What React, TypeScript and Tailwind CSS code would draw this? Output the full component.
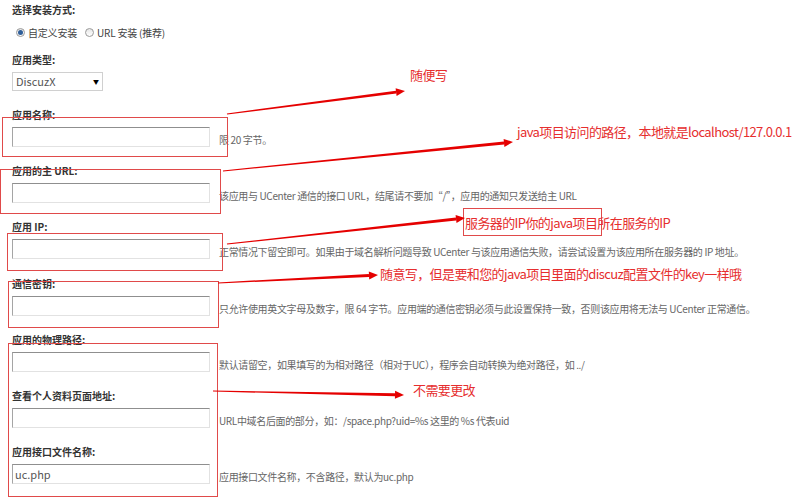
import React from 'react';

const font = { fontFamily: '"Noto Sans CJK SC", "Noto Sans", sans-serif' };

type Field = { label: string; hint: string; value?: string };

const fields: Field[] = [
  { label: '应用名称:', hint: '限 20 字节。' },
  { label: '应用的主 URL:', hint: '该应用与 UCenter 通信的接口 URL，结尾请不要加“/”，应用的通知只发送给主 URL' },
  { label: '应用 IP:', hint: '正常情况下留空即可。如果由于域名解析问题导致 UCenter 与该应用通信失败，请尝试设置为该应用所在服务器的 IP 地址。' },
  { label: '通信密钥:', hint: '只允许使用英文字母及数字，限 64 字节。应用端的通信密钥必须与此设置保持一致，否则该应用将无法与 UCenter 正常通信。' },
  { label: '应用的物理路径:', hint: '默认请留空，如果填写的为相对路径（相对于UC），程序会自动转换为绝对路径，如 ../' },
  { label: '查看个人资料页面地址:', hint: 'URL中域名后面的部分，如：/space.php?uid=%s 这里的 %s 代表uid' },
  { label: '应用接口文件名称:', hint: '应用接口文件名称，不含路径，默认为uc.php', value: 'uc.php' },
];

// red annotation arrows: [x1, y1, tipX, tipY]
const arrows: [number, number, number, number][] = [
  [227, 114, 405, 91],
  [223, 171, 513, 142],
  [227, 244, 465, 218],
  [218, 283, 378, 275],
  [213, 391, 404, 395],
];

// red highlight boxes drawn over the form: [left, top, width, height]
const boxes: [number, number, number, number][] = [
  [2, 117, 226, 40],
  [0, 169, 221, 45],
  [7, 233, 216, 38],
  [8, 281, 211, 47],
  [8, 343, 210, 154],
  [463, 208, 139, 28],
];

// annotation notes: [left, top, text]
const notes: [number, number, string][] = [
  [410, 66, '随便写'],
  [517, 123, 'java项目访问的路径，本地就是localhost/127.0.0.1'],
  [465, 214, '服务器的IP你的java项目所在服务的IP'],
  [380, 265, '随意写，但是要和您的java项目里面的discuz配置文件的key一样哦'],
  [413, 381, '不需要更改'],
];

function arrowPoints(x1: number, y1: number, x2: number, y2: number) {
  const len = Math.hypot(x2 - x1, y2 - y1);
  const ux = (x2 - x1) / len;
  const uy = (y2 - y1) / len;
  const nx = -uy;
  const ny = ux;
  const bx = x2 - ux * 9;
  const by = y2 - uy * 9;
  const p = (x: number, y: number) => `${x.toFixed(1)},${y.toFixed(1)}`;
  const shaft = [
    p(x1 + nx * 0.5, y1 + ny * 0.5),
    p(bx + nx * 1.5, by + ny * 1.5),
    p(bx - nx * 1.5, by - ny * 1.5),
    p(x1 - nx * 0.5, y1 - ny * 0.5),
  ].join(' ');
  const head = [p(x2, y2), p(bx + nx * 4, by + ny * 4), p(bx - nx * 4, by - ny * 4)].join(' ');
  return { shaft, head };
}

function Radio({ checked }: { checked?: boolean }) {
  return (
    <span className="flex h-[9px] w-[9px] items-center justify-center rounded-full border border-[#9a9a9a] bg-gradient-to-b from-[#e6e6e6] to-white">
      {checked && <span className="h-[5px] w-[5px] rounded-full bg-[#2f5f9a]" />}
    </span>
  );
}

function TextInput({ value }: { value?: string }) {
  return (
    <div className="flex h-[20px] w-[198px] items-center border border-t-[#8f8f8f] border-l-[#a5a5a5] border-r-[#e2e2e2] border-b-[#e2e2e2] bg-white pl-[2px] text-[11px] text-[#555]">
      {value}
    </div>
  );
}

export default function App() {
  return (
    <div className="relative h-[500px] w-[800px] overflow-hidden bg-white" style={font}>
      <div className="pl-[12px] pt-[4px]">
        <div className="h-[12px] text-[10px] font-bold leading-[12px] text-[#333]">选择安装方式:</div>
        <div className="mt-[9px] flex h-[14px] items-center gap-[3px] pl-[4px] text-[10px] tracking-[-0.2px] text-[#444]">
          <Radio checked />
          <span className="mr-[5px]">自定义安装</span>
          <Radio />
          <span>URL 安装 (推荐)</span>
        </div>

        <div className="mt-[15px] h-[12px] text-[10px] font-bold leading-[12px] text-[#333]">应用类型:</div>
        <div className="mt-[6px] flex h-[19px] w-[91px] items-center justify-between border border-[#d0d0d0] bg-white pl-[3px] pr-[3px] text-[11px] text-[#555]">
          <span>DiscuzX</span>
          <span className="text-[6px] text-black">▼</span>
        </div>

        {fields.map((f, i) => (
          <div key={f.label} className={i === 0 ? 'mt-[18px]' : 'mt-[18.2px]'}>
            <div className="h-[12px] text-[10px] font-bold leading-[12px] text-[#333]">{f.label}</div>
            <div className="mt-[6px] flex items-end">
              <TextInput value={f.value} />
              <span className="ml-[9px] whitespace-nowrap pb-[1px] text-[10px] leading-[12px] tracking-[-0.35px] text-[#666]">
                {f.hint}
              </span>
            </div>
          </div>
        ))}
      </div>

      {boxes.map(([left, top, width, height], i) => (
        <div
          key={i}
          className="absolute border border-[#e04a4a]"
          style={{ left, top, width, height }}
        />
      ))}

      <svg className="pointer-events-none absolute inset-0" width="800" height="500">
        {arrows.map(([x1, y1, x2, y2], i) => {
          const { shaft, head } = arrowPoints(x1, y1, x2, y2);
          return (
            <g key={i} fill="#e50000">
              <polygon points={shaft} />
              <polygon points={head} />
            </g>
          );
        })}
      </svg>

      {notes.map(([left, top, text]) => (
        <span
          key={text}
          className="absolute whitespace-nowrap text-[13px] leading-[18px] tracking-[-0.6px] text-[#e62e2e]"
          style={{ left, top }}
        >
          {text}
        </span>
      ))}
    </div>
  );
}
